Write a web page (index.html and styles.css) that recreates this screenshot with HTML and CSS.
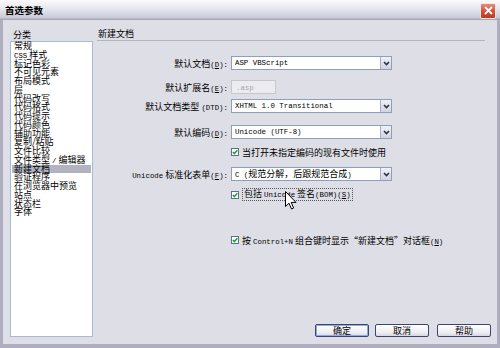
FILE: index.html
```html
<!DOCTYPE html>
<html lang="zh-CN">
<head>
    <meta charset="UTF-8">
    <title>首选参数</title>
    <link rel="stylesheet" href="styles.css">
</head>
<body>

    <div class="window">
        <div class="titlebar">
            <span class="title">首选参数</span>
            <span class="close">
                <svg width="9" height="9" viewBox="0 0 9 9"><path d="M1 1 L8 8 M8 1 L1 8" stroke="#fff" stroke-width="1.8"/></svg>
            </span>
        </div>

        <div class="frame">
            <div class="sidebar">
                <div class="caption">分类</div>
                <ul class="category-list">
                    <li>常规</li>
                    <li><span class="en">CSS</span> 样式</li>
                    <li>标记色彩</li>
                    <li>不可见元素</li>
                    <li>布局模式</li>
                    <li>层</li>
                    <li>代码改写</li>
                    <li>代码格式</li>
                    <li>代码提示</li>
                    <li>代码颜色</li>
                    <li>辅助功能</li>
                    <li>复制/粘贴</li>
                    <li>文件比较</li>
                    <li>文件类型 <span class="en">/</span> 编辑器</li>
                    <li class="selected">新建文档</li>
                    <li>验证程序</li>
                    <li>在浏览器中预览</li>
                    <li>站点</li>
                    <li>状态栏</li>
                    <li>字体</li>
                </ul>
            </div>

            <div class="panel">
                <div class="panel-title">新建文档</div>

                <div class="row row-doc">
                    <span class="field-label">默认文档<span class="en">(<u>D</u>):</span></span>
                    <div class="select"><span class="value en">ASP VBScript</span><span class="arrow"><svg width="7" height="5" viewBox="0 0 7 5"><path d="M1 1 L3.5 3.5 L6 1" fill="none" stroke="#2c3040" stroke-width="1.6"/></svg></span></div>
                </div>

                <div class="row row-ext">
                    <span class="field-label">默认扩展名<span class="en">(<u>E</u>):</span></span>
                    <div class="input disabled"><span class="en">.asp</span></div>
                </div>

                <div class="row row-dtd">
                    <span class="field-label">默认文档类型 <span class="en">(DTD):</span></span>
                    <div class="select"><span class="value en">XHTML 1.0 Transitional</span><span class="arrow"><svg width="7" height="5" viewBox="0 0 7 5"><path d="M1 1 L3.5 3.5 L6 1" fill="none" stroke="#2c3040" stroke-width="1.6"/></svg></span></div>
                </div>

                <div class="row row-enc">
                    <span class="field-label">默认编码<span class="en">(<u>D</u>):</span></span>
                    <div class="select"><span class="value en">Unicode (UTF-8)</span><span class="arrow"><svg width="7" height="5" viewBox="0 0 7 5"><path d="M1 1 L3.5 3.5 L6 1" fill="none" stroke="#2c3040" stroke-width="1.6"/></svg></span></div>
                </div>

                <div class="check-row row-cb1">
                    <span class="checkbox"><svg width="6" height="6" viewBox="0 0 6 6"><path d="M0.8 3 L2.4 4.6 L5.3 1.2" fill="none" stroke="#1fa02a" stroke-width="1.5"/></svg></span>
                    <span>当打开未指定编码的现有文件时使用</span>
                </div>

                <div class="row row-norm">
                    <span class="field-label"><span class="en">Unicode</span> 标准化表单<span class="en">(<u>F</u>):</span></span>
                    <div class="select"><span class="value"><span class="en">C (</span>规范分解，后跟规范合成<span class="en">)</span></span><span class="arrow"><svg width="7" height="5" viewBox="0 0 7 5"><path d="M1 1 L3.5 3.5 L6 1" fill="none" stroke="#2c3040" stroke-width="1.6"/></svg></span></div>
                </div>

                <div class="check-row row-cb2">
                    <span class="checkbox"><svg width="6" height="6" viewBox="0 0 6 6"><path d="M0.8 3 L2.4 4.6 L5.3 1.2" fill="none" stroke="#1fa02a" stroke-width="1.5"/></svg></span>
                    <span class="focused">包括 <span class="en">Unicode</span> 签名<span class="en">(BOM)(<u>S</u>)</span></span>
                    <svg class="cursor" width="12" height="19" viewBox="0 0 12 19"><path d="M0.5 0.5 L0.5 15.5 L4 12.2 L6.5 18 L8.6 17 L6.2 11.4 L11 11.4 Z" fill="#fff" stroke="#000" stroke-width="1"/></svg>
                </div>

                <div class="check-row row-cb3">
                    <span class="checkbox"><svg width="6" height="6" viewBox="0 0 6 6"><path d="M0.8 3 L2.4 4.6 L5.3 1.2" fill="none" stroke="#1fa02a" stroke-width="1.5"/></svg></span>
                    <span>按 <span class="en">Control+N</span> 组合键时显示“新建文档”对话框<span class="en">(<u>N</u>)</span></span>
                </div>

                <div class="buttons">
                    <button class="btn default">确定</button>
                    <button class="btn">取消</button>
                    <button class="btn help">帮助</button>
                </div>
            </div>
        </div>
    </div>

</body>
</html>
```

FILE: styles.css
```css
body {
    margin: 0;
    padding: 0;
    font-family: "Noto Sans CJK SC", sans-serif;
    font-size: 9px;
    color: #000;
    background-color: #dedee6;
}
.en {
    font-family: "Liberation Mono", "Noto Sans CJK SC", monospace;
    font-size: 7.4px;
}
.window {
    width: 500px;
    height: 348px;
    display: flex;
    flex-direction: column;
    overflow: hidden;
}
.titlebar {
    height: 20px;
    flex: none;
    display: flex;
    align-items: center;
    justify-content: space-between;
    padding: 0 4px 0 5px;
    box-sizing: border-box;
    background: linear-gradient(#fbfbfd, #e6e6ee 45%, #cdcdda 90%, #b4b4c4);
    border-bottom: 1px solid #a6a6b8;
}
.title {
    font-weight: bold;
    font-size: 9.5px;
    color: #000;
}
.close {
    width: 14px;
    height: 14px;
    margin-top: 2px;
    display: flex;
    align-items: center;
    justify-content: center;
    border: 1px solid #f4e6e2;
    border-radius: 2px;
    background: linear-gradient(#e98a76, #cf4a33 60%, #b83a26);
}
.frame {
    flex: 1;
    display: flex;
    background-color: #dedee6;
    border: solid #aeaec0;
    border-width: 0 3px 4px 3px;
    padding: 8px 6px 7px 7px;
}
.sidebar {
    width: 83px;
    display: flex;
    flex-direction: column;
}
.caption {
    line-height: 13px;
    padding-left: 3px;
}
.category-list {
    flex: 1;
    list-style: none;
    margin: 0;
    padding: 0 1px;
    background-color: #fff;
    border: 1px solid #a9bbd2;
}
.category-list li {
    height: 8.75px;
    line-height: 8.75px;
    padding-left: 2px;
    white-space: nowrap;
}
.category-list li.selected {
    background-color: #b2b2c0;
}
.panel {
    flex: 1;
    margin-left: 4px;
    display: flex;
    flex-direction: column;
}
.panel-title {
    line-height: 12px;
    padding-left: 1px;
    margin-right: 6px;
    border-bottom: 1px solid #b4b4bc;
}
.row {
    display: flex;
    align-items: center;
}
.field-label {
    width: 131px;
    text-align: right;
    white-space: nowrap;
    margin-right: 3px;
}
.select {
    width: 161px;
    height: 14px;
    box-sizing: border-box;
    display: flex;
    background-color: #fff;
    border: 1px solid #8ea0b8;
}
.select .value {
    flex: 1;
    padding-left: 3px;
    line-height: 12px;
    white-space: nowrap;
}
.select .arrow {
    width: 10px;
    margin: 0;
    display: flex;
    align-items: center;
    justify-content: center;
    background: linear-gradient(#f0f0f6, #d4d4e0);
    border-left: 1px solid #a8b0c4;
}
.input {
    width: 45px;
    height: 14px;
    box-sizing: border-box;
    padding-left: 4px;
    line-height: 12px;
    border: 1px solid #c6c6cc;
}
.input.disabled {
    background-color: #ececf0;
    color: #a8a8ae;
}
.check-row {
    display: flex;
    align-items: center;
    padding-left: 134px;
    white-space: nowrap;
    position: relative;
}
.checkbox {
    width: 8px;
    height: 8px;
    box-sizing: border-box;
    margin-right: 3px;
    display: flex;
    align-items: center;
    justify-content: center;
    background-color: #fff;
    border: 1px solid #5a7090;
}
.focused {
    border: 1px dotted #555;
    line-height: 9px;
    padding: 0 1px;
}
.cursor {
    position: absolute;
    left: 188px;
    top: 2px;
}
.row-doc { margin-top: 15px; }
.row-ext { margin-top: 10px; }
.row-dtd { margin-top: 5px; }
.row-enc { margin-top: 12px; }
.row-cb1 { margin-top: 8px; height: 10px; }
.row-norm { margin-top: 10px; }
.row-cb2 { margin-top: 8px; height: 11px; }
.row-cb3 { margin-top: 35px; height: 10px; }
.buttons {
    margin-top: auto;
    display: flex;
    justify-content: flex-end;
    gap: 6px;
}
.btn {
    width: 54px;
    height: 13px;
    padding: 0;
    font-family: "Noto Sans CJK SC", sans-serif;
    font-size: 9px;
    line-height: 11px;
    color: #000;
    border: 1px solid #3a4670;
    border-radius: 2px;
    background: linear-gradient(#ffffff, #ececf2 70%, #d6d6e0);
}
.btn.default {
    box-shadow: inset 0 0 0 1px #92aadc;
}
.btn.help {
    margin-left: 2px;
}
```
